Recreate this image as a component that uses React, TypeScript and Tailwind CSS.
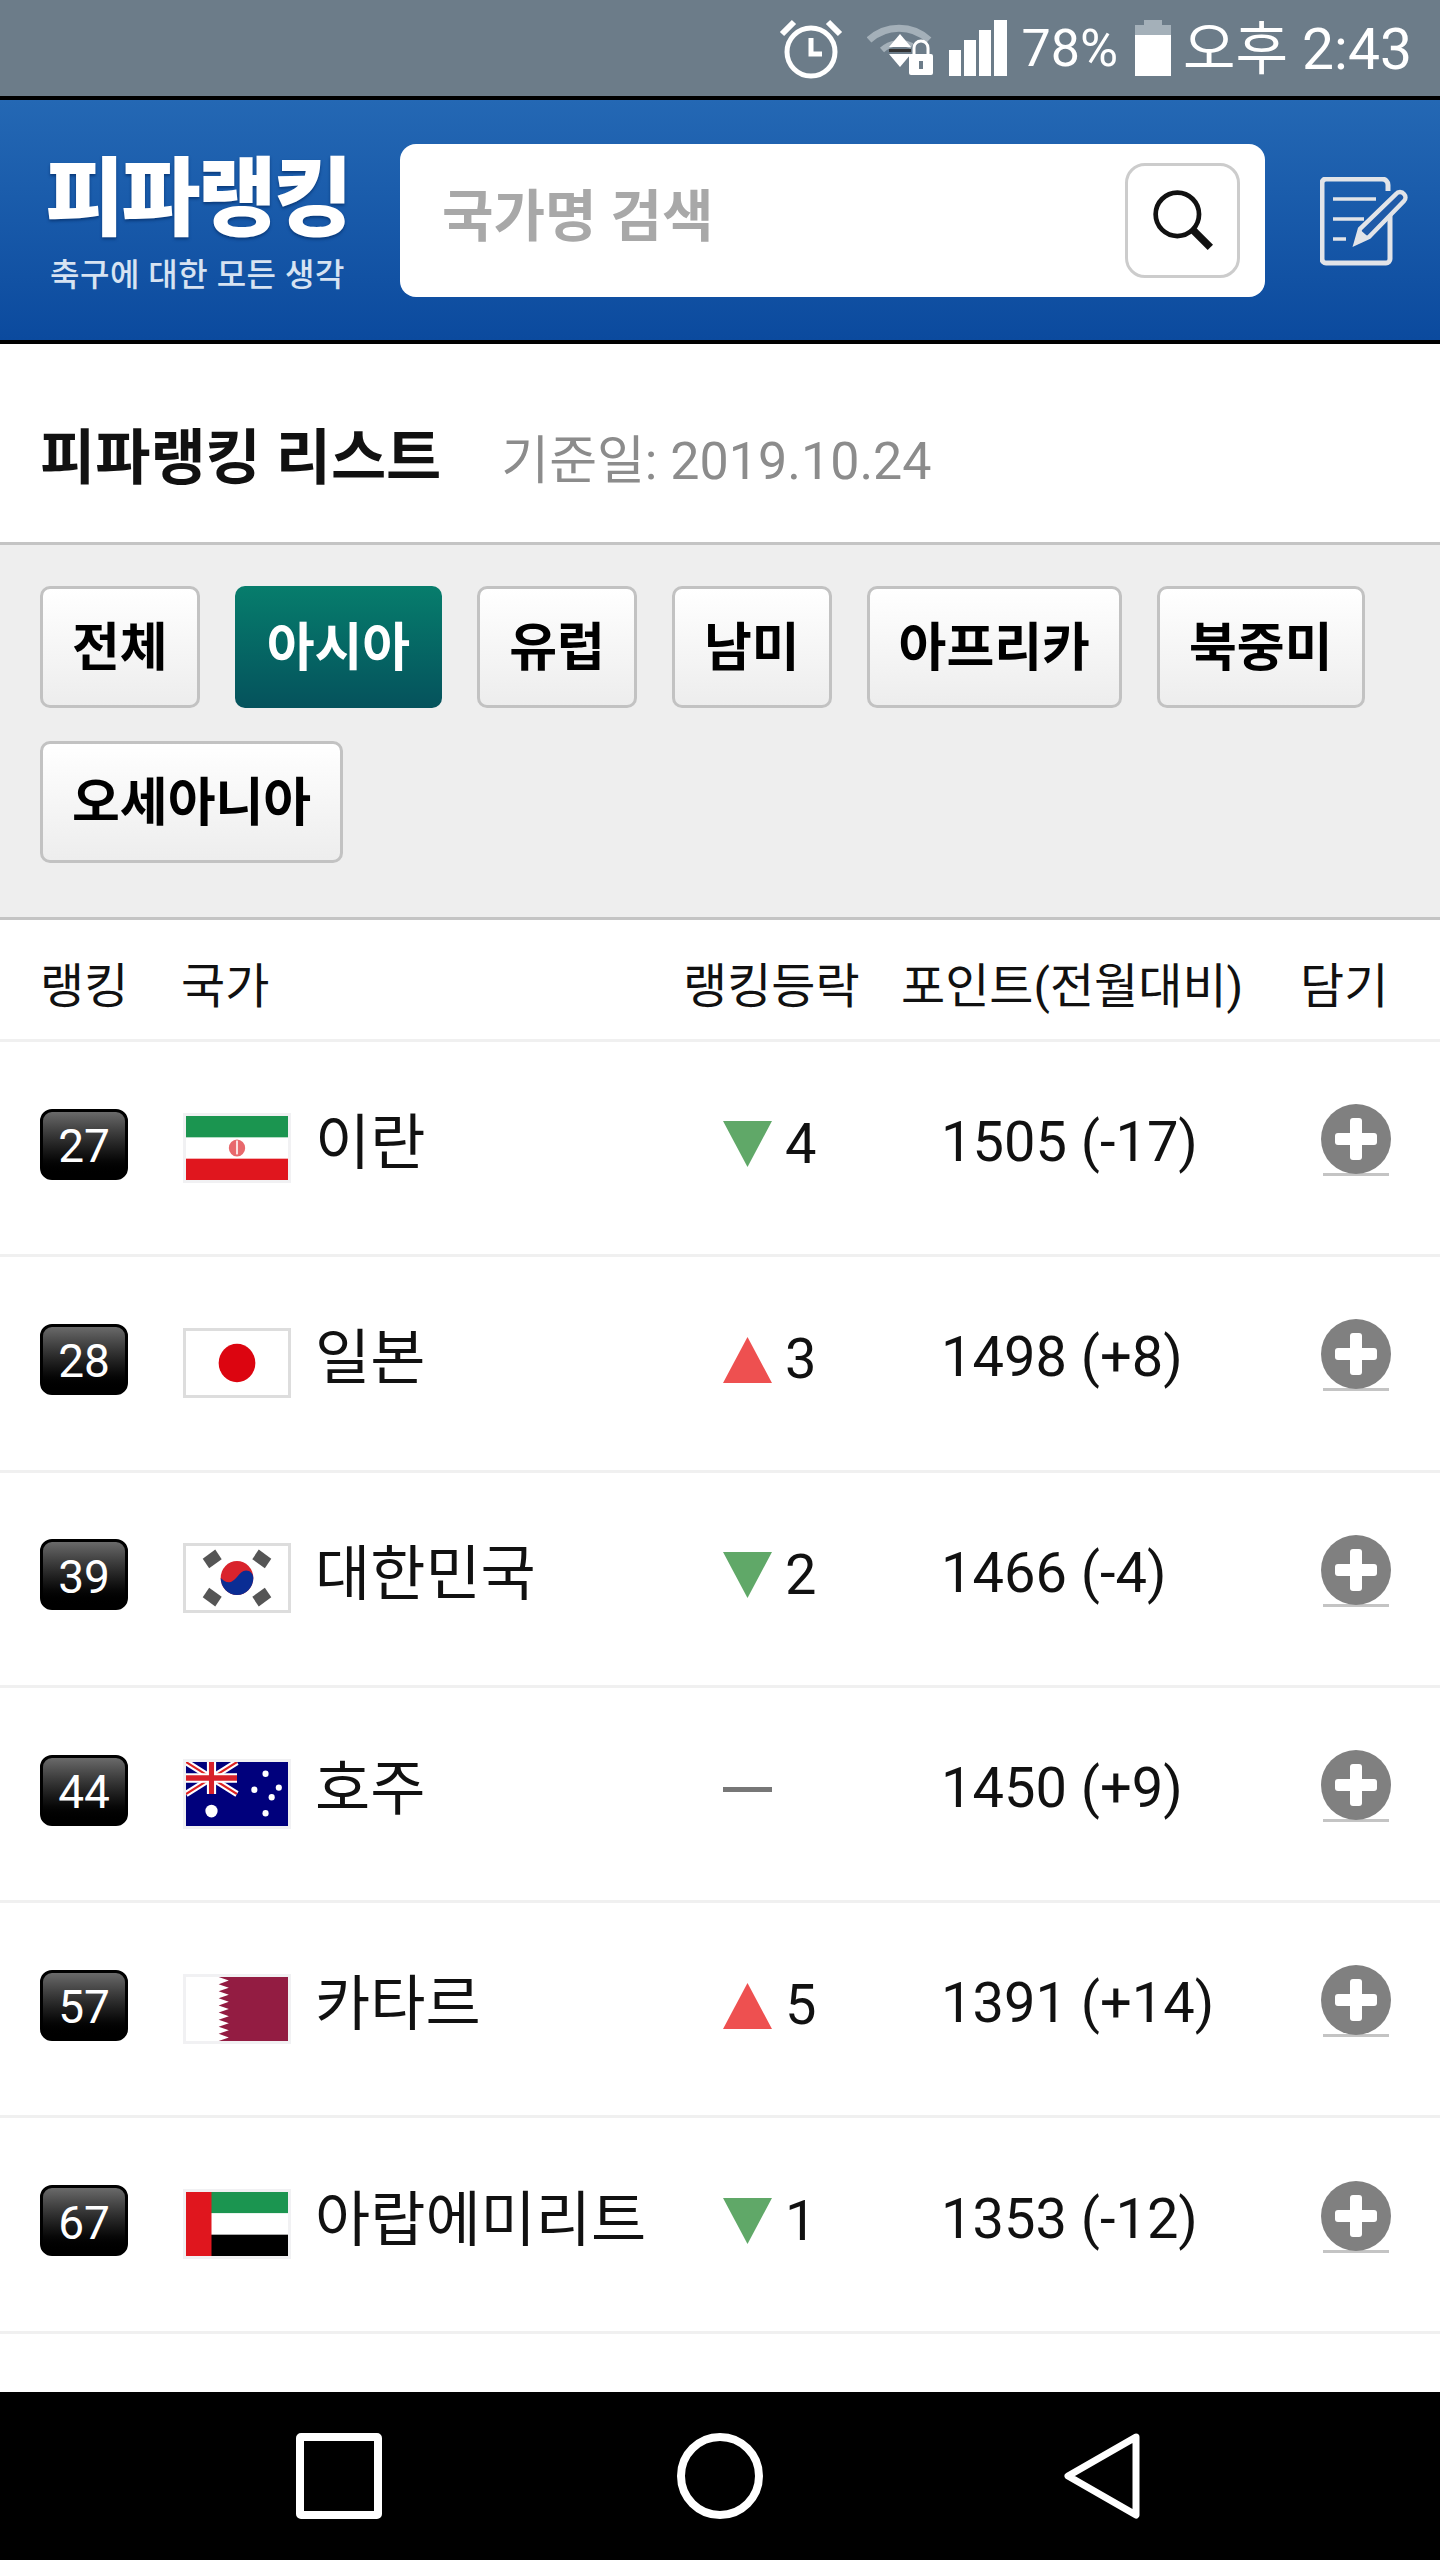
import React from "react";

const sans = "font-['Roboto','Noto_Sans_CJK_KR',sans-serif]";

function Flag({ code }: { code: string }) {
  const border = code === "jp" || code === "kr" ? "border-[#dddddd]" : "border-[#f1f1f3]";
  let art: React.ReactNode = null;
  if (code === "ir")
    art = (
      <>
        <rect width="100" height="60" fill="#fff" />
        <rect width="100" height="20" fill="#1b9550" />
        <rect y="40" width="100" height="20" fill="#e0161e" />
        <circle cx="50" cy="30" r="8" fill="#e8686c" />
        <rect x="49" y="23" width="2" height="13" fill="#fbe0e0" />
      </>
    );
  if (code === "jp")
    art = (
      <>
        <rect width="100" height="60" fill="#fff" />
        <circle cx="50" cy="30" r="18" fill="#dc0510" />
      </>
    );
  if (code === "kr")
    art = (
      <>
        <rect width="100" height="60" fill="#fff" />
        <circle cx="50" cy="30" r="16" fill="#d9232c" />
        <path d="M34 30a16 16 0 0 0 32 0c0-4-3-7-7-7s-6 3-9 6-5 5-8 5-6-2-8-4z" fill="#0a2d94" />
        <g fill="#555">
          <rect x="18" y="7" width="15" height="11" transform="rotate(-35 25 12)" />
          <rect x="67" y="7" width="15" height="11" transform="rotate(35 75 12)" />
          <rect x="18" y="42" width="15" height="11" transform="rotate(35 25 48)" />
          <rect x="67" y="42" width="15" height="11" transform="rotate(-35 75 48)" />
        </g>
      </>
    );
  if (code === "au")
    art = (
      <>
        <rect width="100" height="60" fill="#00007c" />
        <path d="M0 0L50 30M50 0L0 30" stroke="#fff" strokeWidth="6" />
        <path d="M0 0L50 30M50 0L0 30" stroke="#d22" strokeWidth="2" />
        <path d="M25 0V30M0 15H50" stroke="#fff" strokeWidth="9" />
        <path d="M25 0V30M0 15H50" stroke="#d8202a" strokeWidth="5" />
        <g fill="#fff">
          <circle cx="25" cy="46" r="6" />
          <circle cx="78" cy="11" r="3" />
          <circle cx="67" cy="26" r="3" />
          <circle cx="84" cy="33" r="3" />
          <circle cx="91" cy="24" r="3" />
          <circle cx="78" cy="48" r="3" />
        </g>
      </>
    );
  if (code === "qa")
    art = (
      <>
        <rect width="100" height="60" fill="#fff" />
        <path d="M100 0H32L42 3.3L32 6.7L42 10L32 13.3L42 16.7L32 20L42 23.3L32 26.7L42 30L32 33.3L42 36.7L32 40L42 43.3L32 46.7L42 50L32 53.3L42 56.7L32 60H100Z" fill="#931c42" />
      </>
    );
  if (code === "ae")
    art = (
      <>
        <rect width="100" height="20" fill="#1b9550" />
        <rect y="20" width="100" height="20" fill="#fff" />
        <rect y="40" width="100" height="20" fill="#000" />
        <rect width="25" height="60" fill="#e0161e" />
      </>
    );
  return (
    <div className={`w-[108px] h-[70px] shrink-0 border-[3px] ${border} mt-[7px] bg-white`}>
      <svg viewBox="0 0 100 60" preserveAspectRatio="none" className="block w-full h-full">
        {art}
      </svg>
    </div>
  );
}

function Trend({ dir }: { dir: string }) {
  if (dir === "flat") return <div className="w-[49px] h-[5px] bg-[#777777] mt-[-2px]" />;
  return (
    <svg viewBox="0 0 49 46" className={`w-[49px] h-[46px] ${dir === "down" ? "" : "mt-[2px]"}`}>
      {dir === "down" ? (
        <polygon points="0,0 49,0 24.5,46" fill="#60a868" />
      ) : (
        <polygon points="24.5,0 49,46 0,46" fill="#ee5050" />
      )}
    </svg>
  );
}

function PlusIcon() {
  return (
    <svg viewBox="0 0 72 76" className="w-[72px] h-[76px] mt-[-6px]">
      <rect x="3" y="70" width="66" height="3" fill="#c4c4c4" />
      <circle cx="36" cy="36" r="35" fill="#808080" />
      <rect x="30" y="15" width="12" height="42" rx="3" fill="#fff" />
      <rect x="15" y="30" width="42" height="12" rx="3" fill="#fff" />
    </svg>
  );
}

const rows = [
  { rank: "27", code: "ir", name: "이란", dir: "down", n: "4", pts: "1505 (-17)" },
  { rank: "28", code: "jp", name: "일본", dir: "up", n: "3", pts: "1498 (+8)" },
  { rank: "39", code: "kr", name: "대한민국", dir: "down", n: "2", pts: "1466 (-4)" },
  { rank: "44", code: "au", name: "호주", dir: "flat", n: "", pts: "1450 (+9)" },
  { rank: "57", code: "qa", name: "카타르", dir: "up", n: "5", pts: "1391 (+14)" },
  { rank: "67", code: "ae", name: "아랍에미리트", dir: "down", n: "1", pts: "1353 (-12)" },
];

const tabs = ["전체", "아시아", "유럽", "남미", "아프리카", "북중미", "오세아니아"];

export default function App() {
  return (
    <div className={`w-[1440px] h-[2560px] flex flex-col overflow-hidden bg-white ${sans}`}>
      {/* status bar */}
      <div className="h-[100px] shrink-0 bg-[#6c7c89] border-b-[4px] border-black flex items-center justify-end pr-[28px] text-white text-[52px] font-light leading-none">
        <svg viewBox="0 0 64 62" fill="none" stroke="#fff" className="w-[64px] h-[62px] mr-[24px]">
          <circle cx="32" cy="35" r="24" strokeWidth="5" />
          <path d="M32 21V37H43" strokeWidth="5" />
          <path d="M3 17L15 5M61 17L49 5" strokeWidth="6" />
        </svg>
        <svg viewBox="0 0 68 56" className="w-[68px] h-[56px] mr-[14px]">
          <path d="M2 20A44 44 0 0 1 62 20" stroke="#a4b0b9" strokeWidth="7" fill="none" />
          <path d="M15 30A26 26 0 0 1 45 26" stroke="#a4b0b9" strokeWidth="6" fill="none" />
          <polygon points="33,14 44,27 22,27" fill="#fff" />
          <rect x="22" y="29" width="22" height="3" fill="#333" />
          <polygon points="22,34 44,34 33,47" fill="#fff" />
          <rect x="42" y="34" width="24" height="21" rx="2" fill="#fff" />
          <path d="M47 34V28a7 7 0 0 1 14 0V34" stroke="#fff" strokeWidth="3" fill="none" />
          <rect x="52" y="41" width="4" height="8" fill="#6c7c89" />
        </svg>
        <svg viewBox="0 0 58 56" className="w-[58px] h-[56px] mr-[15px]" fill="#fff">
          <rect x="0" y="30" width="12" height="26" />
          <rect x="15" y="20" width="12" height="36" />
          <rect x="30" y="10" width="12" height="46" />
          <rect x="45" y="0" width="13" height="56" />
        </svg>
        <span className="font-normal mt-[2px]">78%</span>
        <svg viewBox="0 0 36 56" className="w-[36px] h-[56px] ml-[17px] mr-[12px]">
          <rect x="9" y="0" width="18" height="5" fill="#a4b0b9" />
          <rect x="0" y="5" width="36" height="10" fill="#a4b0b9" />
          <rect x="0" y="15" width="36" height="41" fill="#fff" />
        </svg>
        <span className="text-[57px] font-normal mt-[2px]">오후 2:43</span>
      </div>

      {/* header */}
      <div className="h-[244px] shrink-0 bg-gradient-to-b from-[#2468b4] to-[#0b4a9e] border-b-[4px] border-black flex items-center pl-[50px]">
        <div className="w-[295px] shrink-0 flex flex-col items-center text-white pt-[12px]">
          <div className="text-[86px] font-black leading-[84px] tracking-[-3px] whitespace-nowrap [text-shadow:0_2px_3px_#0a3a7a]">피파랭킹</div>
          <div className="text-[32px] font-medium leading-[38px] mt-[14px] tracking-[0.5px] text-[#d7e3f2] whitespace-nowrap">축구에 대한 모든 생각</div>
        </div>
        <div className="ml-[55px] w-[865px] h-[153px] shrink-0 bg-white rounded-[16px] flex items-center justify-between pl-[42px] pr-[25px]">
          <span className="text-[56px] font-bold text-[#a8a8a8] leading-none mt-[-6px]">국가명 검색</span>
          <div className="w-[115px] h-[115px] border-[3px] border-[#cccccc] rounded-[20px] flex items-center justify-center">
            <svg viewBox="0 0 70 70" fill="none" stroke="#111" className="w-[66px] h-[66px]">
              <circle cx="29" cy="29" r="23" strokeWidth="5" />
              <path d="M46 46L64 64" strokeWidth="8" />
            </svg>
          </div>
        </div>
        <svg viewBox="0 0 90 90" fill="none" stroke="#e2e4e8" className="ml-[55px] w-[90px] h-[90px] mt-[4px]">
          <path d="M70 36V82a4 4 0 0 1-4 4H6a4 4 0 0 1-4-4V6a4 4 0 0 1 4-4H62a6 6 0 0 1 6 6V14" strokeWidth="5" />
          <path d="M13 22H56M13 42H44M13 62H26" strokeWidth="3.5" />
          <path d="M36 66L40 52L76 17a5 5 0 0 1 8 0a5 5 0 0 1 0 7L49 60Z" fill="#1f5aa8" strokeWidth="4.5" />
          <path d="M36 66L40 54L48 61Z" fill="#e2e4e8" strokeWidth="2" />
        </svg>
      </div>

      {/* title */}
      <div className="h-[198px] shrink-0 flex items-center pl-[40px] pt-[32px]">
        <span className="text-[60px] font-bold text-[#111] leading-none whitespace-nowrap">피파랭킹 리스트</span>
        <span className="ml-[60px] mt-[6px] text-[52px] text-[#8c8c8c] leading-none whitespace-nowrap">기준일: 2019.10.24</span>
      </div>

      {/* filters */}
      <div className="shrink-0 h-[378px] bg-[#eeeeee] border-y-[3px] border-[#c4c4c4] pl-[40px] pt-[41px] flex flex-wrap content-start gap-x-[35px] gap-y-[33px] pr-[40px]">
        {tabs.map((t) => (
          <div
            key={t}
            className={
              t === "아시아"
                ? "h-[122px] px-[32px] pt-[3px] rounded-[10px] bg-gradient-to-b from-[#077d6c] to-[#05525c] text-white flex items-center text-[52px] font-bold leading-none whitespace-nowrap"
                : "h-[122px] px-[29px] pt-[3px] rounded-[10px] border-[3px] border-[#c2c2c2] bg-gradient-to-b from-white to-[#ededed] text-black flex items-center text-[52px] font-bold leading-none whitespace-nowrap"
            }
          >
            {t}
          </div>
        ))}
      </div>

      {/* column headers */}
      <div className="h-[122px] shrink-0 border-b-[3px] border-[#f0f0f0] pl-[40px] pt-[14px] grid grid-cols-[141px_502px_218px_399px_1fr] items-center text-[48px] text-[#111] leading-none whitespace-nowrap">
        <span>랭킹</span>
        <span>국가</span>
        <span>랭킹등락</span>
        <span>포인트(전월대비)</span>
        <span>담기</span>
      </div>

      {/* rows */}
      <div className="flex-1 overflow-hidden">
        {rows.map((r) => (
          <div
            key={r.rank}
            className="h-[215.3px] border-b-[3px] border-[#f0f0f0] pl-[40px] pb-[8px] grid grid-cols-[143px_540px_218px_379px_1fr] items-center"
          >
            <div className="w-[88px] h-[71px] rounded-[12px] border-[3px] border-black bg-gradient-to-b from-[#6a6a6a] to-black text-white text-[46px] leading-none flex items-center justify-center pt-[4px]">
              {r.rank}
            </div>
            <div className="flex items-center">
              <Flag code={r.code} />
              <span className="ml-[24px] text-[60px] text-[#111] leading-none whitespace-nowrap">{r.name}</span>
            </div>
            <div className="flex items-center text-[56px] text-[#111] leading-none">
              <Trend dir={r.dir} />
              {r.n && <span className="ml-[13px]">{r.n}</span>}
            </div>
            <div className="text-[56px] text-[#111] leading-none whitespace-nowrap mt-[-4px]">{r.pts}</div>
            <PlusIcon />
          </div>
        ))}
      </div>

      {/* nav bar */}
      <div className="h-[168px] shrink-0 bg-black flex items-center justify-center gap-[295px]">
        <svg viewBox="0 0 86 86" fill="none" stroke="#fff" strokeWidth="8" className="w-[86px] h-[86px]">
          <rect x="4" y="4" width="78" height="78" rx="1" />
        </svg>
        <svg viewBox="0 0 86 86" fill="none" stroke="#fff" strokeWidth="8" className="w-[86px] h-[86px]">
          <circle cx="43" cy="43" r="39" />
        </svg>
        <svg viewBox="0 0 86 86" fill="none" stroke="#fff" strokeWidth="7" strokeLinejoin="round" className="w-[86px] h-[86px]">
          <polygon points="78,4 10,43 78,82" />
        </svg>
      </div>
    </div>
  );
}
